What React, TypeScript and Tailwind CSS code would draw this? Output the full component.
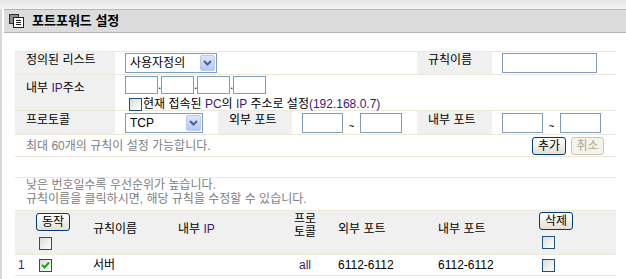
import React from 'react';

const Box = ({ className = '' }: { className?: string }) => (
  <div className={`shrink-0 border border-[#7f9db9] bg-white ${className}`} />
);

const Select = ({ value, className = '' }: { value: string; className?: string }) => (
  <div
    className={`flex h-[20px] items-center justify-between border border-[#7f9db9] bg-white pl-[4px] pr-[1px] ${className}`}
  >
    <span className="leading-[14px]">{value}</span>
    <div className="flex h-[16px] w-[15px] items-center justify-center rounded-[2px] border border-[#b9c9ef] bg-linear-to-b from-[#dce6fd] to-[#b3c8f6]">
      <svg width="9" height="6" viewBox="0 0 9 6">
        <path d="M1 1l3.5 3.5L8 1" fill="none" stroke="#4d6185" strokeWidth="2" />
      </svg>
    </div>
  </div>
);

const Check = ({ checked }: { checked?: boolean }) => (
  <div className="flex h-[13px] w-[13px] shrink-0 items-center justify-center border border-[#1c5180] bg-linear-to-br from-[#dcdcd7] to-white">
    {checked && (
      <svg width="9" height="8" viewBox="0 0 9 8">
        <path d="M1 4l2.5 2.5L8 1.5" fill="none" stroke="#21a121" strokeWidth="2" />
      </svg>
    )}
  </div>
);

const XpButton = ({ label, disabled }: { label: string; disabled?: boolean }) =>
  disabled ? (
    <div className="flex h-[18px] w-[33px] items-center justify-center rounded-[3px] border border-[#c9c7ba] bg-[#f5f4ea] leading-[14px] text-[#aca899]">
      {label}
    </div>
  ) : (
    <div className="flex h-[18px] w-[34px] items-center justify-center rounded-[3px] border border-[#003c74] bg-linear-to-b from-white to-[#e3e1d6] leading-[14px] text-black">
      {label}
    </div>
  );

const Tilde = () => (
  <span className="w-[17px] self-end pb-[1px] text-center text-[10px] leading-[12px]">~</span>
);

const Dot = () => <span className="w-[3px] text-center leading-[18px]">.</span>;

const Latin = ({ children }: { children: React.ReactNode }) => (
  <span className="text-[#3c1a78]">{children}</span>
);

export default function App() {
  return (
    <div className="h-[279px] w-[626px] overflow-hidden bg-white font-['Liberation_Sans','Noto_Sans_CJK_KR',sans-serif] text-[12px] leading-[14px] text-black">
      <div className="h-[9px] bg-linear-to-b from-[#e6e6e6] to-[#f5f5f5]" />
      <div className="flex h-[270px]">
        <div className="w-[2px] bg-[#dadada]" />
        <div className="flex-1 pl-[2px]">
          <div className="flex h-[24px] items-center gap-[8px] border-y border-[#b5b5b5] bg-[#dcdcdc] pl-[5px]">
            <svg width="15" height="14" viewBox="0 0 15 14">
              <rect x="0.5" y="0.5" width="9" height="9" fill="#8c8c8c" stroke="#333" />
              <rect x="4.5" y="3.5" width="10" height="10" fill="#fff" stroke="#222" />
              <path d="M7 6.5h5M7 8.5h5M7 10.5h5" stroke="#222" />
            </svg>
            <span className="text-[13px] font-bold leading-[16px]">포트포워드 설정</span>
          </div>

          <div className="ml-[11px] mt-[18px] w-[601px] border-t border-[#ece9d8]">
            {/* 정의된 리스트 */}
            <div className="flex h-[23px] border-b border-[#ece9d8]">
              <div className="w-[100px] bg-[#f0f0f0] pl-[11px] pt-[1px]">정의된 리스트</div>
              <div className="flex w-[302px] items-center pl-[10px]">
                <Select value="사용자정의" className="w-[92px]" />
              </div>
              <div className="w-[75px] bg-[#f0f0f0] pl-[11px] pt-[1px]">규칙이름</div>
              <div className="flex flex-1 items-center pl-[10px]">
                <Box className="h-[20px] w-[95px]" />
              </div>
            </div>

            {/* 내부 IP */}
            <div className="flex h-[36px] border-b border-[#ece9d8]">
              <div className="w-[100px] bg-[#f0f0f0] pl-[11px] pt-[6px]">
                내부 <Latin>IP</Latin>주소
              </div>
              <div className="flex flex-col pl-[10px] pt-[1px]">
                <div className="flex h-[18px]">
                  <Box className="h-[18px] w-[33px]" />
                  <Dot />
                  <Box className="h-[18px] w-[33px]" />
                  <Dot />
                  <Box className="h-[18px] w-[33px]" />
                  <Dot />
                  <Box className="h-[18px] w-[33px]" />
                </div>
                <div className="mt-[3px] flex items-center pl-[4px]">
                  <Check />
                  <span className="ml-[1px] whitespace-nowrap">
                    현재 접속된 <Latin>PC</Latin>의 <Latin>IP</Latin> 주소로 설정
                    <Latin>(192.168.0.7)</Latin>
                  </span>
                </div>
              </div>
            </div>

            {/* 프로토콜 */}
            <div className="flex h-[24px] border-b border-[#ece9d8]">
              <div className="w-[100px] bg-[#f0f0f0] pl-[11px] pt-[2px]">프로토콜</div>
              <div className="flex w-[103px] items-center pl-[10px]">
                <Select value="TCP" className="w-[78px]" />
              </div>
              <div className="w-[74px] bg-[#f0f0f0] pl-[11px] pt-[2px]">외부 포트</div>
              <div className="flex w-[125px] items-center pl-[10px]">
                <Box className="h-[20px] w-[41px]" />
                <Tilde />
                <Box className="h-[20px] w-[42px]" />
              </div>
              <div className="w-[75px] bg-[#f0f0f0] pl-[11px] pt-[2px]">내부 포트</div>
              <div className="flex flex-1 items-center pl-[10px]">
                <Box className="h-[20px] w-[41px]" />
                <Tilde />
                <Box className="h-[20px] w-[41px]" />
              </div>
            </div>

            <div className="flex h-[22px] items-center justify-between border-b border-[#ece9d8] pl-[11px] pr-[12px]">
              <span className="text-[#808080]">최대 60개의 규칙이 설정 가능합니다.</span>
              <div className="flex gap-[5px]">
                <XpButton label="추가" />
                <XpButton label="취소" disabled />
              </div>
            </div>

            <div className="h-[21px] border-b border-[#ece9d8]" />

            <div className="h-[32px] pl-[11px] text-[#808080]">
              <p>낮은 번호일수록 우선순위가 높습니다.</p>
              <p>규칙이름을 클릭하시면, 해당 규칙을 수정할 수 있습니다.</p>
            </div>

            {/* list header */}
            <div className="flex h-[45px] border-y border-[#ece9d8] bg-[#f0f0f0]">
              <div className="w-[18px]" />
              <div className="flex w-[55px] flex-col pl-[3px] pt-[2px]">
                <XpButton label="동작" />
                <div className="ml-[3px] mt-[6px]">
                  <Check />
                </div>
              </div>
              <div className="w-[87px] pl-[5px] pt-[11px]">규칙이름</div>
              <div className="w-[107px] pl-[3px] pt-[11px]">
                내부 <Latin>IP</Latin>
              </div>
              <div className="w-[46px] pt-[2px] text-center leading-[13px]">
                <p>프로</p>
                <p>토콜</p>
              </div>
              <div className="w-[107px] pl-[10px] pt-[11px]">외부 포트</div>
              <div className="w-[101px] pl-[3px] pt-[11px]">내부 포트</div>
              <div className="flex flex-1 flex-col pl-[3px] pt-[1px]">
                <XpButton label="삭제" />
                <div className="ml-[3px] mt-[6px]">
                  <Check />
                </div>
              </div>
            </div>

            <div className="flex h-[21px] items-center border-b border-[#ece9d8]">
              <div className="w-[18px] pl-[3px]">
                <Latin>1</Latin>
              </div>
              <div className="w-[55px] pl-[6px]">
                <Check checked />
              </div>
              <div className="w-[87px] pl-[5px]">서버</div>
              <div className="w-[107px]" />
              <div className="w-[46px] text-center">
                <Latin>all</Latin>
              </div>
              <div className="w-[107px] pl-[10px]">6112-6112</div>
              <div className="w-[101px] pl-[3px]">6112-6112</div>
              <div className="flex-1 pl-[6px]">
                <Check />
              </div>
            </div>
          </div>
        </div>
      </div>
    </div>
  );
}
